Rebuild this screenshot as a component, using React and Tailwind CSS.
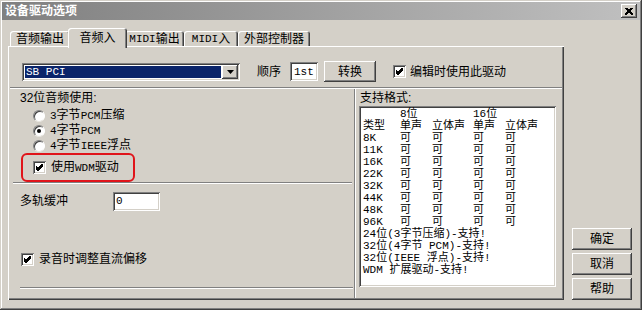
import React from "react";

const raised =
  "shadow-[inset_-1px_-1px_#404040,inset_1px_1px_#ffffff,inset_-2px_-2px_#808080]";
const sunken =
  "shadow-[inset_1px_1px_#808080,inset_-1px_-1px_#ffffff,inset_2px_2px_#404040,inset_-2px_-2px_#d4d0c8]";
const sans = "font-['Liberation_Sans','Noto_Sans_CJK_SC',sans-serif]";
const mono = "font-['Liberation_Mono','Noto_Sans_CJK_SC',monospace]";

// ascii runs a bit smaller, like the bitmap SimSun half-width glyphs
function M({ children }) {
  return String(children)
    .split(/([\x20-\x7e]+)/)
    .map((s, i) =>
      /^[\x20-\x7e]+$/.test(s) ? (
        <span key={i} className={`${mono} text-[11px]`}>
          {s}
        </span>
      ) : (
        <span key={i}>{s}</span>
      )
    );
}

function Check() {
  return (
    <span
      className={`w-[13px] h-[13px] bg-white ${sunken} flex items-center justify-center shrink-0`}
    >
      <svg width="7" height="7" viewBox="0 0 7 7" shapeRendering="crispEdges">
        <path
          d="M0 2.5 L2 4.5 L7 -0.5 M0 3.5 L2 5.5 L7 0.5 M0 4.5 L2 6.5 L7 1.5"
          stroke="#000"
          fill="none"
        />
      </svg>
    </span>
  );
}

function Radio({ on }) {
  return (
    <span className="w-[12px] h-[12px] shrink-0 rounded-full bg-white border border-t-[#808080] border-l-[#808080] border-r-white border-b-[#e8e6e0] shadow-[inset_1px_1px_#404040] flex items-center justify-center">
      {on && <span className="w-[4px] h-[4px] rounded-full bg-black" />}
    </span>
  );
}

function Etch({ className = "" }) {
  return (
    <div
      className={`h-[2px] border-t border-t-[#808080] border-b border-b-white ${className}`}
    />
  );
}

function Btn({ children, className = "" }) {
  return (
    <div
      className={`bg-[#d4d0c8] ${raised} flex items-center justify-center leading-[14px] ${className}`}
    >
      {children}
    </div>
  );
}

function Tab({ label, active, w }) {
  return (
    <div
      className={`${w} rounded-t-[3px] bg-[#d4d0c8] shadow-[inset_1px_1px_#ffffff,inset_-1px_0_#404040,inset_-2px_0_#808080] flex justify-center ${
        active
          ? "h-[20px] -mb-[2px] -mx-[2px] relative z-10 pt-[3px]"
          : "h-[15px] pt-[1px]"
      } leading-[14px]`}
    >
      <M>{label}</M>
    </div>
  );
}

const rates = ["8K", "11K", "16K", "22K", "32K", "44K", "48K", "96K"];

export default function App() {
  return (
    <div
      className={`w-[642px] h-[310px] bg-[#d4d0c8] p-[2px] flex flex-col shadow-[inset_-1px_-1px_#404040,inset_1px_1px_#d4d0c8,inset_-2px_-2px_#808080,inset_2px_2px_#ffffff] ${sans} text-[12px] text-black`}
    >
      {/* title bar */}
      <div className="h-[18px] shrink-0 flex items-center bg-linear-to-r from-[#808080] to-[#c0c0c0] pl-[3px] pr-[3px]">
        <span className="text-white font-bold leading-[18px]">设备驱动选项</span>
        <div
          className={`ml-auto w-[16px] h-[14px] bg-[#d4d0c8] ${raised} flex items-center justify-center`}
        >
          <svg width="8" height="7" viewBox="0 0 8 7" shapeRendering="crispEdges">
            <path d="M0.5 0 L7.5 7 M1.5 0 L8.5 7 M7.5 0 L0.5 7 M6.5 0 L-0.5 7" stroke="#000" />
          </svg>
        </div>
      </div>

      <div className="flex mt-[8px] pl-[6px]">
        <div className="w-[556px] flex flex-col">
          {/* tabs */}
          <div className="h-[18px] flex items-end pl-[2px]">
            <Tab label="音频输出" w="w-[60px]" />
            <Tab label="音频入" w="w-[59px]" active />
            <Tab label="MIDI输出" w="w-[59px]" />
            <Tab label="MIDI入" w="w-[54px]" />
            <Tab label="外部控制器" w="w-[72px]" />
          </div>

          {/* panel */}
          <div className="h-[254px] bg-[#d4d0c8] shadow-[inset_1px_1px_#ffffff,inset_-1px_-1px_#404040,inset_-2px_-2px_#808080] flex flex-col pt-[15px]">
            <div className="h-[21px] flex items-center">
              <div className={`ml-[14px] w-[218px] h-[18px] bg-white ${sunken} flex p-[2px]`}>
                <div className="flex-1 m-[1px] mr-[1px] bg-[#0a246a] text-white leading-[12px] pl-[1px] flex items-center">
                  <span className={`${mono} text-[11px]`}>SB PCI</span>
                </div>
                <div className={`w-[16px] bg-[#d4d0c8] ${raised} flex items-center justify-center`}>
                  <svg width="7" height="4" viewBox="0 0 7 4">
                    <path d="M0 0h7l-3.5 4z" fill="#000" />
                  </svg>
                </div>
              </div>
              <span className="ml-[17px] leading-[14px]">顺序</span>
              <div className={`ml-[9px] w-[28px] h-[19px] bg-white ${sunken} flex items-center pl-[4px]`}>
                <span className={`${mono} text-[11px] leading-[12px]`}>1st</span>
              </div>
              <Btn className="ml-[6px] w-[52px] h-[21px]">转换</Btn>
              <span className="ml-[17px]">
                <Check />
              </span>
              <span className="ml-[4px] leading-[14px]">编辑时使用此驱动</span>
            </div>

            <Etch className="mt-[5px] mx-[2px]" />

            <div className="flex-1 flex mb-[2px]">
              {/* left column */}
              <div className="ml-[2px] w-[346px] border-r border-r-white shadow-[inset_-1px_0_#808080] flex flex-col">
                <div className="mt-[1px] h-[16px] leading-[16px] pl-[10px]">32位音频使用:</div>
                <div className="mt-[2px] flex flex-col pl-[23px]">
                  {[
                    ["3字节PCM压缩", false],
                    ["4字节PCM", true],
                    ["4字节IEEE浮点", false],
                  ].map(([t, on]) => (
                    <div key={t} className="h-[15px] flex items-center gap-[5px] leading-[15px]">
                      <Radio on={on} />
                      <span>
                        <M>{t}</M>
                      </span>
                    </div>
                  ))}
                </div>
                <div className="ml-[11px] w-[114px] h-[29px] border-2 border-[#e0141a] rounded-[6px] flex items-center pl-[10px] gap-[5px]">
                  <Check />
                  <span className="leading-[14px]">
                    <M>使用WDM驱动</M>
                  </span>
                </div>
                <Etch className="mx-[3px]" />
                <div className="mt-[7px] h-[20px] flex items-center pl-[10px]">
                  <span className="w-[93px] leading-[14px]">多轨缓冲</span>
                  <div className={`w-[47px] h-[19px] bg-white ${sunken} flex items-center pl-[3px]`}>
                    <span className={`${mono} text-[11px] leading-[12px]`}>0</span>
                  </div>
                </div>
                <div className="mt-[40px] h-[16px] flex items-center pl-[11px] gap-[5px]">
                  <Check />
                  <span className="leading-[14px]">录音时调整直流偏移</span>
                </div>
                <Etch className="mt-[20px] ml-[10px] mr-[2px]" />
              </div>

              {/* right column */}
              <div className="flex-1 mr-[2px] flex flex-col">
                <div className="mt-[1px] h-[16px] leading-[16px] pl-[4px]">支持格式:</div>
                <div
                  className={`ml-[3px] w-[197px] h-[181px] bg-white ${sunken} pt-[2px] pl-[4px] ${mono} text-[11px] leading-[12px]`}
                >
                  <div className="grid grid-cols-[37px_32px_41px_32px_1fr]">
                    <span />
                    <span>8位</span>
                    <span />
                    <span>16位</span>
                    <span />
                    <span>类型</span>
                    <span>单声</span>
                    <span>立体声</span>
                    <span>单声</span>
                    <span>立体声</span>
                    {rates.map((r) => (
                      <React.Fragment key={r}>
                        <span>{r}</span>
                        <span>可</span>
                        <span>可</span>
                        <span>可</span>
                        <span>可</span>
                      </React.Fragment>
                    ))}
                  </div>
                  <div className="whitespace-pre">24位(3字节压缩)-支持!</div>
                  <div className="whitespace-pre">32位(4字节 PCM)-支持!</div>
                  <div className="whitespace-pre">32位(IEEE 浮点)-支持!</div>
                  <div className="whitespace-pre">WDM 扩展驱动-支持!</div>
                </div>
              </div>
            </div>
          </div>
        </div>

        {/* dialog buttons */}
        <div className="w-[60px] ml-[8px] flex flex-col justify-end gap-[3px]">
          <Btn className="h-[22px]">确定</Btn>
          <Btn className="h-[22px]">取消</Btn>
          <Btn className="h-[22px]">帮助</Btn>
        </div>
      </div>
    </div>
  );
}
